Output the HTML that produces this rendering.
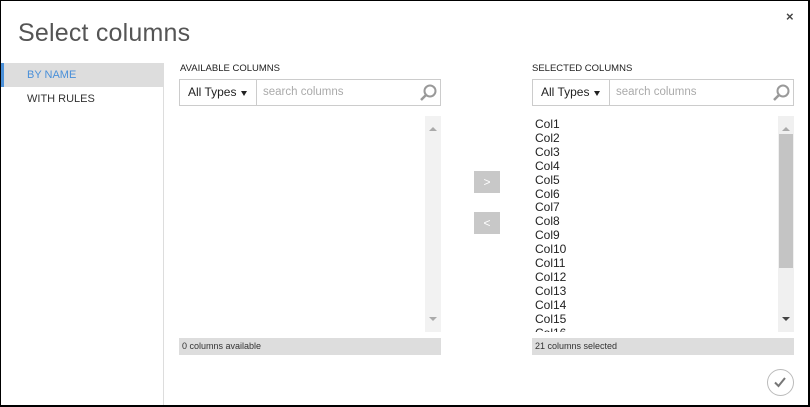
<!DOCTYPE html>
<html><head><style>
*{box-sizing:border-box;margin:0;padding:0}
body{width:810px;height:407px;background:#fff;font-family:"Liberation Sans",sans-serif;overflow:hidden;position:relative}
.frame{position:absolute;left:0;top:0;width:810px;height:407px;border:1px solid #000;border-bottom:2px solid #000;border-right:2px solid #000}
.title{position:absolute;left:18px;top:19px;font-size:25px;color:#555;font-weight:normal;letter-spacing:0.2px}
.close{position:absolute;left:786px;top:9px;font-size:13px;color:#444;font-weight:bold}
.side{position:absolute;left:1px;top:63px;width:163px;height:342px;border-right:1px solid #ddd}
.nav{height:24px;font-size:11px;line-height:25px;padding-left:26px;color:#333}
.nav.act{background:#ddd;color:#4a90d9;border-left:3px solid #4a90d9;padding-left:23px}
.lbl{position:absolute;font-size:9.5px;color:#222;top:63px}
.sbox{position:absolute;top:79px;width:262px;height:27px;border:1px solid #ccc;display:flex}
.dd{width:77px;border-right:1px solid #ccc;font-size:12px;color:#222;line-height:25px;padding-left:8px;position:relative}
.dd:after{content:"";position:absolute;right:9px;top:11px;border:3px solid transparent;border-top:5px solid #222}
.sr{flex:1;font-size:11.5px;color:#aaa;line-height:25px;padding-left:6px;position:relative}
.list{position:absolute;top:116px;width:262px;height:220px;overflow:hidden}
.sb{position:absolute;right:0;top:0;width:16px;height:216px;background:#f0f0f0}
.up{position:absolute;left:4px;top:7px;border:4px solid transparent;border-bottom:4px solid #aaa}
.dn{position:absolute;left:4px;bottom:7px;border:4px solid transparent;border-top:4px solid #aaa}
.dn.k{border-top-color:#444}
.thumb{position:absolute;left:1px;top:18px;width:14px;height:134px;background:#c4c4c4}
.items{position:absolute;left:3px;top:2px;font-size:12px;line-height:13.9px;color:#222}
.status{position:absolute;top:338px;width:262px;height:17px;background:#ddd;font-size:9px;color:#333;line-height:17px;padding-left:3px}
.btn{position:absolute;left:474px;width:26px;height:22px;background:#c8c8c8;color:#fff;font-size:12px;text-align:center;line-height:22px}
.ok{position:absolute;left:767px;top:369px;width:27px;height:27px;border:1.5px solid #bbb;border-radius:50%}
</style></head><body>
<div class="frame"></div>
<div class="title">Select columns</div>
<div class="close">×</div>
<div class="side"><div class="nav act">BY NAME</div><div class="nav">WITH RULES</div></div>

<div class="lbl" style="left:180px">AVAILABLE COLUMNS</div>
<div class="sbox" style="left:179px"><div class="dd">All Types</div><div class="sr">search columns<svg style="position:absolute;right:2px;top:3px" width="20" height="20" viewBox="0 0 20 20"><circle cx="12" cy="8" r="5.5" fill="none" stroke="#999" stroke-width="2"/><line x1="8" y1="12" x2="3" y2="17" stroke="#999" stroke-width="2.5"/></svg></div></div>
<div class="list" style="left:179px;height:216px"><div class="sb" style="background:#f2f2f2"><div class="up"></div><div class="dn"></div></div></div>
<div class="status" style="left:179px">0 columns available</div>

<div class="btn" style="top:171px">&gt;</div>
<div class="btn" style="top:212px">&lt;</div>

<div class="lbl" style="left:532px">SELECTED COLUMNS</div>
<div class="sbox" style="left:532px"><div class="dd">All Types</div><div class="sr">search columns<svg style="position:absolute;right:2px;top:3px" width="20" height="20" viewBox="0 0 20 20"><circle cx="12" cy="8" r="5.5" fill="none" stroke="#999" stroke-width="2"/><line x1="8" y1="12" x2="3" y2="17" stroke="#999" stroke-width="2.5"/></svg></div></div>
<div class="list" style="left:532px;height:216px"><div class="items">Col1<br>Col2<br>Col3<br>Col4<br>Col5<br>Col6<br>Col7<br>Col8<br>Col9<br>Col10<br>Col11<br>Col12<br>Col13<br>Col14<br>Col15<br>Col16</div><div class="sb"><div class="up"></div><div class="thumb"></div><div class="dn k"></div></div></div>
<div class="status" style="left:532px">21 columns selected</div>

<div class="ok"><svg width="24" height="24" viewBox="0 0 24 24" style="position:absolute;left:0;top:0"><path d="M7 12.5l3.5 3.5 6.5-8" fill="none" stroke="#777" stroke-width="2"/></svg></div>
</body></html>
